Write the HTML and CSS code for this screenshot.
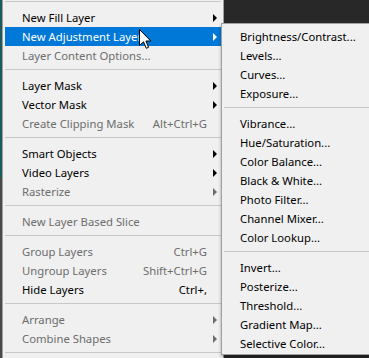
FILE: index.html
```html
<!DOCTYPE html>
<html lang="en">
<head>
  <meta charset="UTF-8">
  <title>Layer Menu</title>
  <link rel="stylesheet" href="styles.css">
</head>
<body>
  <div class="edge"></div>

  <!-- Layer menu -->
  <div class="menu main_menu">
    <div class="sep first"></div>
    <div class="item sub">New Fill Layer</div>
    <div class="item sub active">New Adjustment Layer</div>
    <div class="item off">Layer Content Options...</div>
    <div class="sep"></div>
    <div class="item sub">Layer Mask</div>
    <div class="item sub">Vector Mask</div>
    <div class="item off"><span>Create Clipping Mask</span><span class="key">Alt+Ctrl+G</span></div>
    <div class="sep"></div>
    <div class="item sub">Smart Objects</div>
    <div class="item sub">Video Layers</div>
    <div class="item sub off">Rasterize</div>
    <div class="sep"></div>
    <div class="item off">New Layer Based Slice</div>
    <div class="sep"></div>
    <div class="item off"><span>Group Layers</span><span class="key">Ctrl+G</span></div>
    <div class="item off"><span>Ungroup Layers</span><span class="key">Shift+Ctrl+G</span></div>
    <div class="item"><span>Hide Layers</span><span class="key">Ctrl+,</span></div>
    <div class="sep"></div>
    <div class="item sub off">Arrange</div>
    <div class="item sub off">Combine Shapes</div>
    <div class="sep"></div>
  </div>

  <div class="canvas"></div>

  <!-- Adjustment submenu -->
  <div class="menu sub_menu">
    <div class="item">Brightness/Contrast...</div>
    <div class="item">Levels...</div>
    <div class="item">Curves...</div>
    <div class="item">Exposure...</div>
    <div class="sep"></div>
    <div class="item">Vibrance...</div>
    <div class="item">Hue/Saturation...</div>
    <div class="item">Color Balance...</div>
    <div class="item">Black &amp; White...</div>
    <div class="item">Photo Filter...</div>
    <div class="item">Channel Mixer...</div>
    <div class="item">Color Lookup...</div>
    <div class="sep"></div>
    <div class="item">Invert...</div>
    <div class="item">Posterize...</div>
    <div class="item">Threshold...</div>
    <div class="item">Gradient Map...</div>
    <div class="item">Selective Color...</div>
  </div>

  <svg class="cursor" width="13" height="21" viewBox="0 0 13 21">
    <path d="M0.5 0.5 V16.5 L4.5 12.8 L7.3 19.3 L9.6 18.3 L6.9 12 H11.8 Z" fill="#fff" stroke="#000" stroke-width="1" stroke-linejoin="miter"/>
  </svg>
</body>
</html>
```

FILE: styles.css
```css
body {
  margin: 0;
  width: 369px;
  height: 358px;
  display: flex;
  overflow: hidden;
  position: relative;
  background-color: #282828;
  font-family: 'Noto Sans', 'Open Sans', sans-serif;
  font-size: 11.3px;
}

/* window edge behind the menu */
.edge {
  width: 2px;
  flex: none;
  background: linear-gradient(#1f5a5a 0, #1f5a5a 178px, #4a4a4a 178px);
}

.menu {
  background-color: #f0f0f0;
  color: #000;
}

/* Main menu */
.main_menu {
  width: 216px;
  flex: none;
  padding: 0 2px;
  border-left: 1px solid #a0a0a0;
  border-right: 1px solid #a0a0a0;
}

.canvas {
  flex: 1;
}

.item {
  height: 19px;
  line-height: 19px;
  padding: 0 14px 0 17px;
  display: flex;
  justify-content: space-between;
  position: relative;
  white-space: nowrap;
}
.item.off {
  color: #6d6d6d;
}
.item.active {
  background-color: #0078d7;
  color: #fff;
}
.item.sub::after {
  content: '';
  position: absolute;
  left: 208px;
  top: 6px;
  border-left: 4px solid currentColor;
  border-top: 4px solid transparent;
  border-bottom: 4px solid transparent;
}

.sep {
  height: 1px;
  margin: 4px 0 6px;
  background-color: #c8c8c8;
}
.sep.first {
  margin-top: 1px;
}

/* Submenu, cut off by the right edge of the shot */
.sub_menu {
  position: absolute;
  left: 221px;
  top: 23px;
  width: 146px;
  padding: 3px 0 1px 2px;
  border: 1px solid #a0a0a0;
  border-right: none;
  box-shadow: 0 2px 3px rgba(0, 0, 0, 0.3);
}
.sub_menu .item {
  padding-left: 16px;
}

.cursor {
  position: absolute;
  left: 139px;
  top: 29px;
}
```
